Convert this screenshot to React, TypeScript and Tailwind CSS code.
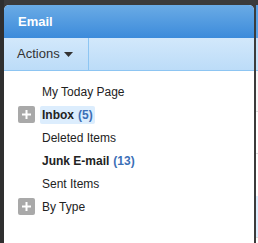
export default function App() {
  const font = { fontFamily: '"Liberation Sans", Arial, sans-serif' };
  const Plus = () => (
    <div className="w-[17px] h-[17px] rounded-[2px] bg-[#a9a9a9] flex items-center justify-center">
      <svg width="9" height="9" viewBox="0 0 9 9">
        <rect x="3.5" y="0" width="2" height="9" fill="#fff" />
        <rect x="0" y="3.5" width="9" height="2" fill="#fff" />
      </svg>
    </div>
  );
  return (
    <div className="w-[258px] h-[243px] bg-[#3b3b3b] flex overflow-hidden" style={font}>
      <div className="w-[4px] h-full bg-[#2f2f2f]" />
      <div className="w-[250px] mt-[5px] flex flex-col bg-white rounded-t-[5px] overflow-hidden">
        <div className="h-[33px] bg-gradient-to-b from-[#6aabe5] to-[#3b8bdb] flex items-center pl-[14px] text-white font-bold text-[13px]">
          Email
        </div>
        <div className="h-[33px] bg-gradient-to-b from-[#d2e8fb] to-[#bcdcf8] border-b border-[#8dc5f2] flex">
          <div className="w-[85px] border-r border-[#8dc5f2] flex items-center pl-[13px] text-[13px] text-[#333]">
            Actions
            <svg width="9" height="5" viewBox="0 0 9 5" className="ml-[4px] mt-[1px]">
              <path d="M0 0 L9 0 L4.5 5 Z" fill="#333" />
            </svg>
          </div>
        </div>
        <div className="pt-[9px] flex flex-col text-[12px] text-[#222]">
          <div className="h-[23px] flex items-center pl-[38px]">My Today Page</div>
          <div className="h-[23px] flex items-center pl-[14px]">
            <Plus />
            <div className="ml-[5px] h-[18px] px-[2px] bg-[#dcedfd] rounded-[2px] flex items-center font-bold">
              Inbox<span className="ml-[4px] text-[#3b6fb6]">(5)</span>
            </div>
          </div>
          <div className="h-[23px] flex items-center pl-[38px]">Deleted Items</div>
          <div className="h-[23px] flex items-center pl-[38px] font-bold">
            Junk E-mail<span className="ml-[4px] text-[#3b6fb6]">(13)</span>
          </div>
          <div className="h-[23px] flex items-center pl-[38px]">Sent Items</div>
          <div className="h-[23px] flex items-center pl-[14px]">
            <Plus />
            <div className="ml-[7px]">By Type</div>
          </div>
        </div>
      </div>
      <div className="w-[2px] h-full bg-[#3b3b3b]" />
      <div className="w-[2px] mt-[5px] flex flex-col bg-white">
        <div className="h-[33px] bg-[#5aa0e2]" />
        <div className="h-[33px] bg-[#c9e3fa] border-b border-[#8dc5f2]" />
        <div className="h-[41px] bg-[#f7f7f7] border-b border-[#dddddd]" />
        <div className="h-[42px] bg-white border-b border-[#dddddd]" />
        <div className="h-[42px] bg-white" />
        <div className="h-[42px] bg-[#ddeeff] border-b border-[#dddddd]" />
      </div>
    </div>
  );
}
